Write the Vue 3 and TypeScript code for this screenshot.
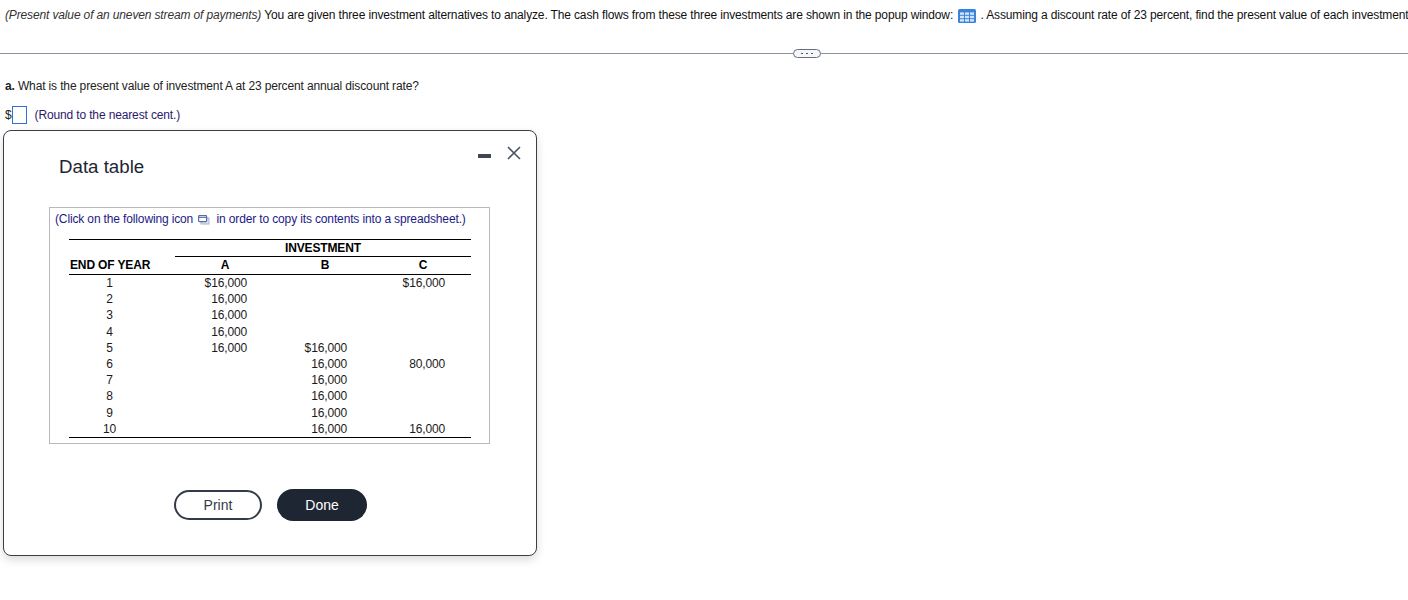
<script setup lang="ts">
interface Row {
  year: number
  a: string
  b: string
  c: string
}

const rows: Row[] = [
  { year: 1, a: '$16,000', b: '', c: '$16,000' },
  { year: 2, a: '16,000', b: '', c: '' },
  { year: 3, a: '16,000', b: '', c: '' },
  { year: 4, a: '16,000', b: '', c: '' },
  { year: 5, a: '16,000', b: '$16,000', c: '' },
  { year: 6, a: '', b: '16,000', c: '80,000' },
  { year: 7, a: '', b: '16,000', c: '' },
  { year: 8, a: '', b: '16,000', c: '' },
  { year: 9, a: '', b: '16,000', c: '' },
  { year: 10, a: '', b: '16,000', c: '16,000' }
]
</script>

<template>
  <div class="page">
    <p class="intro">
      <em>(Present value of an uneven stream of payments)</em> You are given three investment alternatives to analyze. The cash flows from these three investments are shown in the popup window:
      <svg class="grid-icon" width="18" height="14" viewBox="0 0 18 14" aria-hidden="true">
        <rect x="0" y="0" width="18" height="14" rx="1.5" fill="#3a82dc" />
        <g fill="#d5e5f9">
          <rect x="2" y="3.4" width="4" height="2.4" />
          <rect x="7" y="3.4" width="4" height="2.4" />
          <rect x="12" y="3.4" width="4" height="2.4" />
          <rect x="2" y="6.8" width="4" height="2.4" />
          <rect x="7" y="6.8" width="4" height="2.4" />
          <rect x="12" y="6.8" width="4" height="2.4" />
          <rect x="2" y="10.2" width="4" height="2.4" />
          <rect x="7" y="10.2" width="4" height="2.4" />
          <rect x="12" y="10.2" width="4" height="2.4" />
        </g>
      </svg>
      . Assuming a discount rate of 23 percent, find the present value of each investment.
    </p>

    <div class="divider">
      <span class="pill"><i></i><i></i><i></i></span>
    </div>

    <p class="question"><b>a.</b> What is the present value of investment A at 23 percent annual discount rate?</p>
    <div class="answer">
      <span>$</span>
      <span class="input"></span>
      <span class="hint">(Round to the nearest cent.)</span>
    </div>

    <section class="modal">
      <div class="window-controls">
        <span class="minimize"></span>
        <svg width="14" height="14" viewBox="0 0 14 14" aria-hidden="true">
          <path d="M1 1 L13 13 M13 1 L1 13" stroke="#4b5563" stroke-width="1.6" fill="none" />
        </svg>
      </div>
      <h2 class="title">Data table</h2>

      <div class="box">
        <p class="copy-note">
          (Click on the following icon
          <svg class="copy-icon" width="12" height="10" viewBox="0 0 12 10" aria-hidden="true">
            <rect x="3" y="3" width="8" height="6" fill="#d9dff0" stroke="#aab4d8" stroke-width="1" />
            <rect x="0.6" y="0.6" width="8" height="6" rx="0.8" fill="#fff" stroke="#5a6aa8" stroke-width="1.2" />
            <path d="M1 2.4 H8.4" stroke="#5a6aa8" stroke-width="1" />
          </svg>
          in order to copy its contents into a spreadsheet.)
        </p>

        <table class="data">
          <colgroup>
            <col class="c-year" />
            <col class="c-gap" />
            <col class="c-a" />
            <col class="c-b" />
            <col class="c-c" />
          </colgroup>
          <thead>
            <tr class="head-top">
              <th colspan="2"></th>
              <th colspan="3" class="invest">INVESTMENT</th>
            </tr>
            <tr class="head-bottom">
              <th class="year-head">END OF YEAR</th>
              <th class="gap"></th>
              <th class="sub">A</th>
              <th class="sub">B</th>
              <th class="sub">C</th>
            </tr>
          </thead>
          <tbody>
            <tr v-for="row in rows" :key="row.year">
              <td class="year">{{ row.year }}</td>
              <td></td>
              <td class="num num-a">{{ row.a }}</td>
              <td class="num num-b">{{ row.b }}</td>
              <td class="num num-c">{{ row.c }}</td>
            </tr>
          </tbody>
        </table>
      </div>

      <div class="actions">
        <button class="btn print" type="button">Print</button>
        <button class="btn done" type="button">Done</button>
      </div>
    </section>
  </div>
</template>

<style>
html,
body {
  margin: 0;
  background: #fff;
  overflow: hidden;
}
</style>

<style scoped>
.page {
  position: relative;
  width: 1408px;
  height: 600px;
  overflow: hidden;
  font-family: "Liberation Sans", Arial, sans-serif;
  font-size: 12px;
  letter-spacing: -0.14px;
  color: #1a1a1a;
}

.intro {
  margin: 0;
  padding: 7px 0 0 5px;
  height: 53px;
  box-sizing: border-box;
  line-height: 16px;
  white-space: nowrap;
  color: #111;
}

.intro em {
  color: #333;
}

.grid-icon {
  vertical-align: -4px;
  margin: 0 1px 0 2px;
}

.divider {
  position: relative;
  height: 1px;
  background: #8a92a0;
}

.pill {
  position: absolute;
  left: 793px;
  top: -4px;
  width: 28px;
  height: 9px;
  box-sizing: border-box;
  border: 1px solid #667080;
  border-radius: 5px;
  background: #f4f6f9;
  display: flex;
  align-items: center;
  justify-content: center;
  gap: 3px;
}

.pill i {
  width: 2px;
  height: 1px;
  background: #4b5563;
}

.question {
  margin: 0;
  padding: 24px 0 0 5px;
  line-height: 16px;
  color: #222;
}

.answer {
  display: flex;
  align-items: center;
  padding: 12px 0 0 5px;
  line-height: 16px;
  color: #222;
}

.input {
  width: 15px;
  height: 18px;
  box-sizing: border-box;
  border: 1px solid #2f6fd8;
  background: #fff;
}

.hint {
  margin-left: 8px;
  color: #2b1a6b;
}

.modal {
  position: absolute;
  left: 3px;
  top: 130px;
  width: 534px;
  height: 426px;
  box-sizing: border-box;
  border: 1px solid #3a3f47;
  border-radius: 8px;
  background: #fff;
  box-shadow: 0 4px 10px rgba(0, 0, 0, 0.14);
  padding: 25px 46px 0 45px;
}

.window-controls {
  position: absolute;
  top: 15px;
  right: 15px;
  display: flex;
  align-items: center;
  gap: 16px;
}

.minimize {
  width: 13px;
  height: 4px;
  margin-top: 5px;
  background: #3f4754;
}

.title {
  margin: 0 0 0 10px;
  font-size: 18.7px;
  font-weight: 400;
  line-height: 22px;
  letter-spacing: 0;
  color: #1e2533;
}

.box {
  width: 441px;
  height: 237px;
  margin-top: 29px;
  box-sizing: border-box;
  border: 1px solid #b9b9b9;
  padding: 3px 18px 0 5px;
}

.copy-note {
  margin: 0;
  line-height: 16px;
  color: #1b1a86;
  white-space: nowrap;
}

.copy-icon {
  vertical-align: -2px;
  margin: 0 3px 0 2px;
}

.data {
  width: 402px;
  margin: 12px 0 0 14px;
  border-collapse: collapse;
  table-layout: fixed;
  border-bottom: 1px solid #000;
  color: #1a1a1a;
}

.c-year { width: 81px; }
.c-gap { width: 25px; }
.c-a { width: 100px; }
.c-b { width: 100px; }
.c-c { width: 96px; }

.data th,
.data td {
  padding: 0;
  font-size: 12px;
  height: 16px;
  line-height: 16px;
}

.data th {
  color: #000;
}

.head-top th {
  border-top: 1px solid #000;
  height: 16px;
}

.invest {
  border-bottom: 1px solid #000;
  text-align: left;
  padding-left: 110px !important;
}

.head-bottom th {
  border-bottom: 1px solid #000;
  height: 17px;
  line-height: 16px;
  vertical-align: top;
}

.year-head {
  text-align: left;
  padding-left: 1px !important;
  white-space: nowrap;
}

.sub {
  text-align: center;
}

.data tbody td {
  height: 16.2px;
}

.year {
  text-align: center;
}

.num {
  text-align: right;
}

.num-a { padding-right: 28px !important; }
.num-b { padding-right: 28px !important; }
.num-c { padding-right: 26px !important; }

.actions {
  display: flex;
  align-items: center;
  justify-content: center;
  gap: 15px;
  width: 443px;
  margin: 45px 0 0 0;
}

.btn {
  box-sizing: border-box;
  font-family: inherit;
  font-size: 14px;
  letter-spacing: 0;
  padding: 0;
  cursor: pointer;
}

.print {
  width: 88px;
  height: 30px;
  border: 2px solid #343b48;
  border-radius: 15px;
  background: #fff;
  color: #333a47;
}

.done {
  width: 90px;
  height: 32px;
  border: 0;
  border-radius: 16px;
  background: #1e2533;
  color: #fff;
}
</style>
